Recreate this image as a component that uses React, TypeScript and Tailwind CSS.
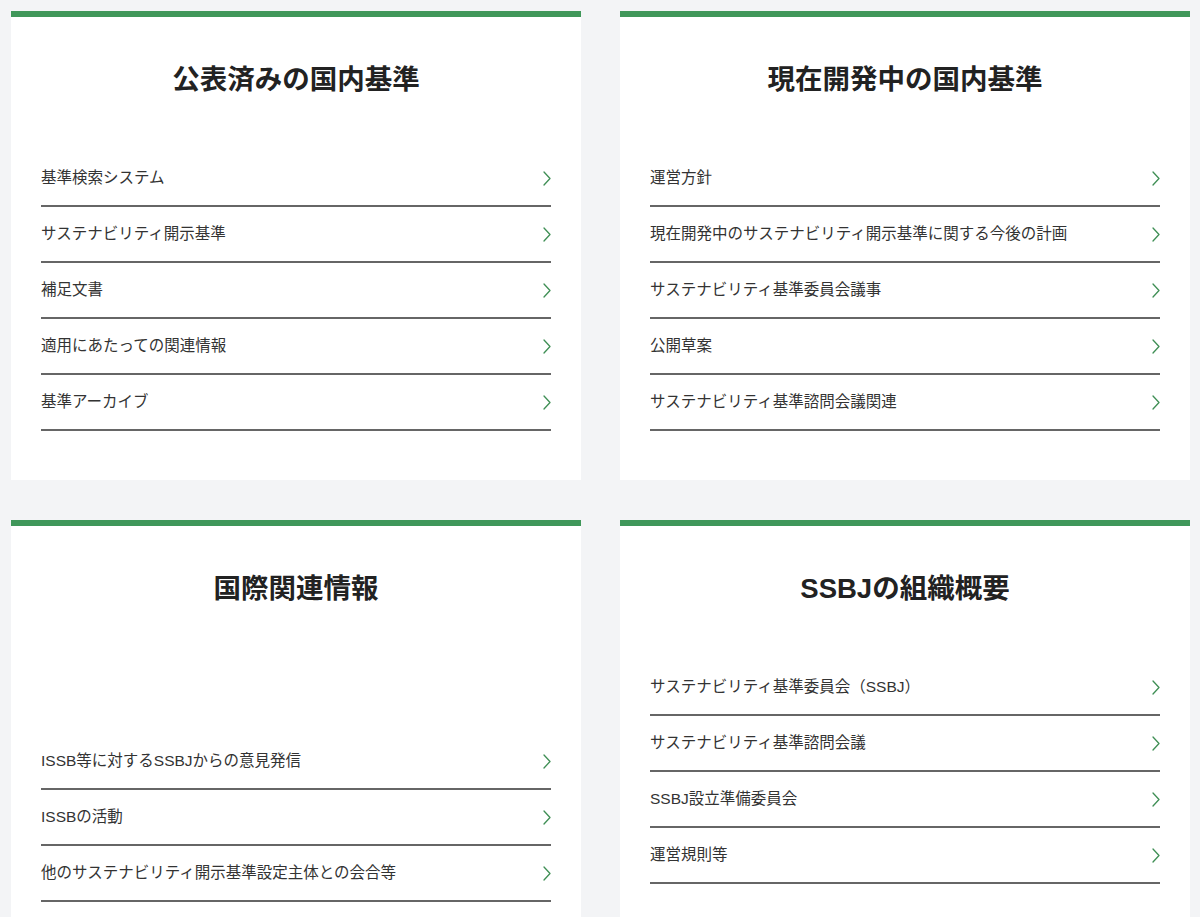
import React from "react";

interface Section {
  title: string;
  items: string[];
  spacer?: boolean;
}

const sections: Section[] = [
  {
    title: "公表済みの国内基準",
    items: ["基準検索システム", "サステナビリティ開示基準", "補足文書", "適用にあたっての関連情報", "基準アーカイブ"],
  },
  {
    title: "現在開発中の国内基準",
    items: [
      "運営方針",
      "現在開発中のサステナビリティ開示基準に関する今後の計画",
      "サステナビリティ基準委員会議事",
      "公開草案",
      "サステナビリティ基準諮問会議関連",
    ],
  },
  {
    title: "国際関連情報",
    items: ["ISSB等に対するSSBJからの意見発信", "ISSBの活動", "他のサステナビリティ開示基準設定主体との会合等"],
    spacer: true,
  },
  {
    title: "SSBJの組織概要",
    items: ["サステナビリティ基準委員会（SSBJ）", "サステナビリティ基準諮問会議", "SSBJ設立準備委員会", "運営規則等"],
  },
];

const Chevron = () => (
  <svg width="8" height="15" viewBox="0 0 8 15" fill="none" className="shrink-0">
    <path d="M1 1 L7 7.5 L1 14" stroke="#3f8f55" strokeWidth="1.3" strokeLinecap="round" strokeLinejoin="round" />
  </svg>
);

const Card: React.FC<{ section: Section }> = ({ section }) => (
  <div className="bg-white border-t-[6px] border-[#40975a] flex flex-col pt-[45px] pb-[49px] px-[30px]">
    <h2 className="text-center text-[27.5px] leading-[36px] font-bold text-[#222]">{section.title}</h2>
    <div className={section.spacer ? "mt-[127px]" : "mt-[53px]"}>
      {section.items.map((item) => (
        <a
          key={item}
          href="#"
          className="flex items-center justify-between h-[56px] border-b-2 border-[#666] text-[15.5px] text-[#333]"
        >
          <span>{item}</span>
          <Chevron />
        </a>
      ))}
    </div>
  </div>
);

export default function App() {
  return (
    <div
      className="min-h-screen bg-[#f3f4f6] pl-[11px] pr-[10px] pt-[11px] pb-[40px]"
      style={{ fontFamily: '"Liberation Sans", "Noto Sans CJK JP", sans-serif' }}
    >
      <div className="grid grid-cols-[570px_570px] gap-x-[39px] gap-y-[40px]">
        {sections.map((s) => (
          <Card key={s.title} section={s} />
        ))}
      </div>
    </div>
  );
}
